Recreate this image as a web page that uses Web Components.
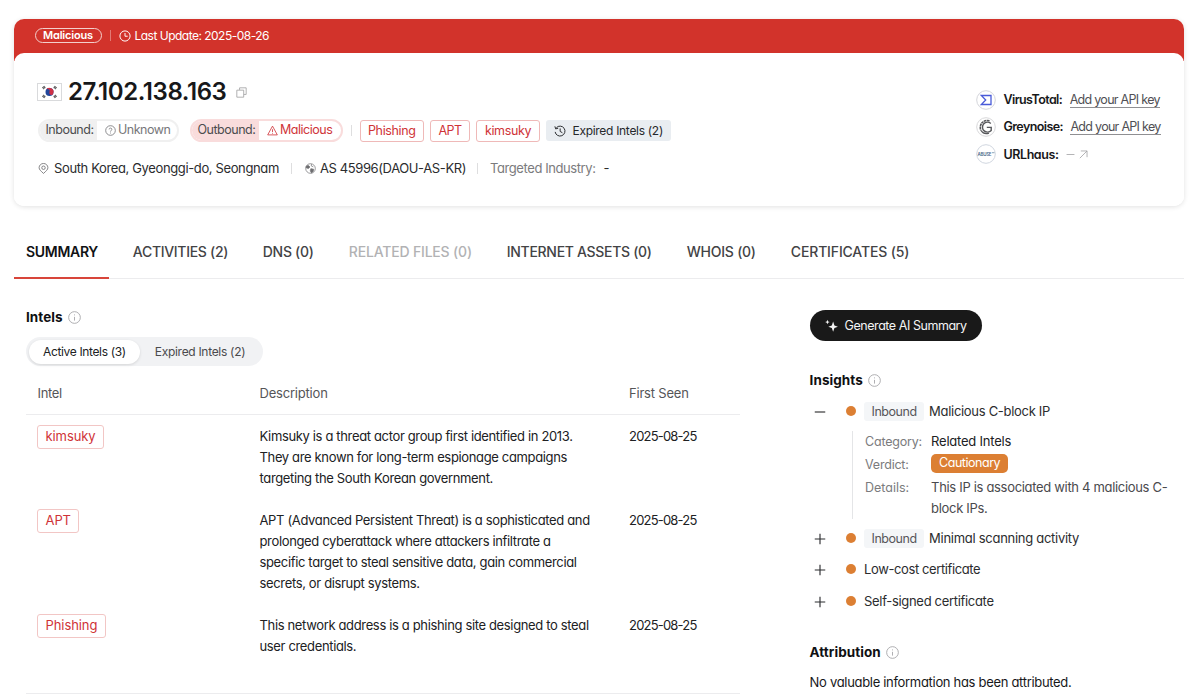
<!DOCTYPE html>
<html lang="en">
<head>
<meta charset="utf-8">
<title>27.102.138.163</title>
<style>
  :root {
    --red: #d2332b;
    --orange: #dc7f33;
    --ink: #17181a;
    --gray: #7b7b7d;
    --line: #ececee;
  }
  body {
    margin: 0;
    height: 699px;
    overflow: hidden;
    background: #fff;
    color: var(--ink);
    font: 13px/21px Inter, "Liberation Sans", sans-serif;
    font-feature-settings: "cv11";
    letter-spacing: -0.35px;
    white-space: nowrap;
  }
</style>
</head>
<body>
<ip-report></ip-report>

<script>
// --- Icons ---
const ICONS = {
  clock: `<circle cx="8" cy="8" r="6.8"/><path d="M8 4v4.3h3.6"/>`,
  copy: `<path d="M5.2 4.2V1.2h9.6v9.6h-3.4"/><path d="M1.2 4.6h10v10.2h-10z"/>`,
  help: `<circle cx="8" cy="8" r="7"/><path d="M6 6.4C6 3.8 10 4 10 6.3 10 8 8 7.8 8 9.6M8 11v1.3"/>`,
  warn: `<path d="M8 1.6 15 14.4H1Z"/><path d="M8 6.2v4M8 11.4v1.2"/>`,
  history: `<path d="M3.2 3.6A6.6 6.6 0 1 1 1.5 9.2M1.2 1.8l1 3.4 3.4-.9"/><path d="M8.2 4.6v4l3 1.7"/>`,
  pin: `<path d="M8 15.2C4.2 11.6 1.6 9.6 1.6 6.8a6.4 6.1 0 0 1 12.8 0C14.4 9.6 11.8 11.6 8 15.2Z"/><circle cx="8" cy="6.9" r="2.5"/>`,
  globe: `<circle cx="8" cy="8" r="7"/><path d="M2 4.5 5 3.6 7.2 5.8 5 8 1.6 7Z" fill="currentColor"/><path d="M8.5 8.2l4 .8-.6 3.2-2.6 2.2-1.6-3Z" fill="currentColor"/><path d="M9.5 1.6l-.4 2.600 3 1.400"/>`,
  info: `<circle cx="8" cy="8" r="7.2"/><path d="M8 7.2v4.6M8 4.2v1.2"/>`,
  arrow: `<path d="M1.5 14.5 14.3 1.7M3.2 1.7h11.1v11.1"/>`,
  minus: `<path d="M1 8h14"/>`,
  plus: `<path d="M1 8h14M8 1v14"/>`,
  spark: `<path d="M10 3.2 11.6 7.9 15.9 9.5 11.6 11.1 10 15.8 8.4 11.1 4.1 9.5 8.4 7.9ZM3 1l.8 2 2 .8-2 .8L3 6.6l-.8-2-2-.8 2-.8Z" fill="currentColor" stroke="none"/>`
};

class UiIcon extends HTMLElement {
  constructor() {
    super();
    this.attachShadow({ mode: 'open' });
  }

  connectedCallback() {
    const size = this.getAttribute('size') || 12;
    const weight = this.getAttribute('weight') || 1.3;
    this.shadowRoot.innerHTML = `
      <style>
        :host { display: block; flex: none; }
        svg { display: block; }
      </style>
      <svg width="${size}" height="${size}" viewBox="0 0 16 16" fill="none"
        stroke="currentColor" stroke-width="${weight}">${ICONS[this.getAttribute('name')]}</svg>
    `;
  }
}

// --- Elements that only wrap their slot ---
const define = (name, css, html = '<slot></slot>') => {
  customElements.define(name, class extends HTMLElement {
    constructor() {
      super();
      this.attachShadow({ mode: 'open' }).innerHTML = `<style>${css}</style>${html}`;
    }
  });
};

define('ui-divider', `
  :host { display: block; flex: none; width: 1px; height: 11px; background: #dededf; }
`);

define('intel-chip', `
  :host {
    display: block;
    box-sizing: border-box;
    height: 22px;
    padding: 0 7.5px;
    border: 1px solid #efb9b8;
    border-radius: 3px;
    background: #fff;
    color: #cf3337;
    font-size: 12.5px;
    line-height: 19px;
    text-align: center;
  }
`);

define('section-title', `
  :host {
    display: flex;
    align-items: center;
    gap: 5px;
    height: 20px;
    font-size: 13.5px;
    font-weight: 700;
    line-height: 20px;
    letter-spacing: 0.05px;
    color: #0f1012;
  }
  ui-icon { color: #a5a5a8; margin-top: 1px; }
`, '<slot></slot><ui-icon name="info" size="13" weight="1.1"></ui-icon>');

define('direction-pill', `
  :host {
    display: flex;
    box-sizing: border-box;
    height: 23px;
    border: 2px solid var(--tint);
    border-radius: 12px;
    overflow: hidden;
    background: #fff;
    color: var(--tone);
    font-size: 12.5px;
    line-height: 18px;
    letter-spacing: -0.49px;
  }
  .label {
    box-sizing: border-box;
    width: var(--label);
    padding-left: 5.5px;
    background: var(--tint);
    color: #4c4c4e;
  }
  .value { display: flex; align-items: center; gap: 2px; height: 18px; padding-left: 8px; }
`, '<div class="label"><slot name="label"></slot></div><div class="value"><slot></slot></div>');

// --- Header card ---
define('ip-header', `
  :host {
    display: block;
    height: 187px;
    border-radius: 10px;
    background: linear-gradient(var(--red) 0 42px, #fff 42px);
    box-shadow: 0 1px 5px rgba(0, 0, 0, 0.12);
  }
  .ribbon {
    display: flex;
    align-items: center;
    height: 33.5px;
    padding-left: 20.5px;
    box-sizing: border-box;
    color: #fff;
    font-size: 12px;
    letter-spacing: -0.51px;
  }
  .verdict {
    box-sizing: border-box;
    width: 67px;
    height: 15px;
    margin-right: 8px;
    border: 1px solid #f3cfcc;
    border-radius: 8px;
    font-size: 11px;
    font-weight: 600;
    line-height: 13px;
    letter-spacing: -0.17px;
    text-align: center;
  }
  .ribbon ui-divider { background: #e27a74; }
  .ribbon ui-icon { margin: 0 4px 0 8px; }
  .card {
    box-sizing: border-box;
    display: flex;
    justify-content: space-between;
    height: 153.5px;
    padding: 25.5px 0 0 24px;
    border-radius: 10px;
    background: #fff;
  }
  .row { display: flex; align-items: center; }
  .ip { height: 27px; gap: 6.5px; margin-left: -1.5px; }
  .ip b {
    font-size: 24px;
    font-weight: 600;
    letter-spacing: -0.42px;
    line-height: 28px;
  }
  .ip ui-icon { color: #a0a0a2; margin: 2px 0 0 3.5px; }
  .tags { height: 23px; margin-top: 14px; letter-spacing: -0.36px; }
  .tags ui-divider { margin: 0 8px; }
  .tags intel-chip { margin-right: 6px; }
  .expired {
    display: flex;
    align-items: center;
    box-sizing: border-box;
    width: 125px;
    height: 21px;
    padding-left: 8px;
    gap: 6.5px;
    border-radius: 3px;
    background: #e9edf1;
    font-size: 12px;
    line-height: 20px;
    letter-spacing: -0.3px;
    color: #26282b;
  }
  .place { height: 21px; margin-top: 16px; color: #2b2c2e; letter-spacing: -0.37px; }
  .place ui-icon { color: #6d6d70; }
  .sources {
    display: grid;
    grid-auto-rows: 27.3px;
    width: 208.5px;
    margin-top: 8px;
    font-size: 12.5px;
  }
  .source { display: flex; align-items: center; }
  .source svg { display: block; margin-right: 8px; }
  .source b { font-weight: 600; letter-spacing: -0.59px; margin-right: 7.5px; }
  .source a { border-bottom: 1px solid #8f8f92; color: #505054; letter-spacing: -0.71px; line-height: 15px; }
`, `
  <div class="ribbon">
    <div class="verdict">Malicious</div>
    <ui-divider></ui-divider>
    <ui-icon name="clock" size="12"></ui-icon>
    Last Update: 2025-08-26
  </div>
  <div class="card">
    <div>
      <div class="row ip">
        <svg width="25" height="18" viewBox="0 0 25 18">
          <rect x=".5" y=".5" width="24" height="17" fill="#fff" stroke="#d9dadc"/>
          <circle cx="12.5" cy="9" r="4" fill="#22479b"/>
          <path d="M8.5 9A4 4 0 0 1 16.5 9a2 2 0 0 1-4 0 2 2 0 0 0-4 0Z" fill="#cd3045" transform="rotate(25 12.5 9)"/>
          <g stroke="#3a3a3c" stroke-width="3" stroke-dasharray=".8 .3">
            <path d="M6.2 3.6 7.6 5.6M18.8 3.6l-1.4 2M6.2 14.4l1.4-2M18.8 14.4l-1.4-2"/>
          </g>
        </svg>
        <b>27.102.138.163</b>
        <ui-icon name="copy" size="11" weight="1.2"></ui-icon>
      </div>
      <div class="row tags">
        <direction-pill style="--tint:#f0f0f0;--tone:#77777a;--label:57px;width:141px">
          <span slot="label">Inbound:</span><ui-icon name="help" size="11" weight="1.2"></ui-icon>Unknown
        </direction-pill>
        <direction-pill style="--tint:#f9dcdc;--tone:#d0353a;--label:67px;width:152.5px;margin-left:11px">
          <span slot="label">Outbound:</span><ui-icon name="warn" size="11" weight="1.2"></ui-icon>Malicious
        </direction-pill>
        <ui-divider></ui-divider>
        <intel-chip style="width:64.5px">Phishing</intel-chip>
        <intel-chip style="width:40px;letter-spacing:-.6px">APT</intel-chip>
        <intel-chip style="width:64px">kimsuky</intel-chip>
        <div class="expired"><ui-icon name="history" size="12"></ui-icon>Expired Intels (2)</div>
      </div>
      <div class="row place">
        <ui-icon name="pin" size="11" weight="1.2" style="margin-right:5px"></ui-icon>
        South Korea, Gyeonggi-do, Seongnam
        <ui-divider style="margin:0 13px 0 12px"></ui-divider>
        <ui-icon name="globe" size="11" weight="1" style="margin-right:4px"></ui-icon>
        <span style="letter-spacing:-.39px">AS 45996(DAOU-AS-KR)</span>
        <ui-divider style="margin:0 12px 0 11px"></ui-divider>
        <span style="color:var(--gray);letter-spacing:-.42px;margin-right:8px">Targeted Industry:</span> -
      </div>
    </div>
    <div class="sources">
      <div class="source">
        <svg width="20" height="20" viewBox="0 0 20 20" fill="none">
          <circle cx="10" cy="10" r="9.3" stroke="#d4d5da"/>
          <path d="M5.3 5.5H15v9H5.3L9.7 10Z" stroke="#4a5bd8" stroke-width="1.3"/>
        </svg>
        <b>VirusTotal:</b><a>Add your API key</a>
      </div>
      <div class="source">
        <svg width="20" height="20" viewBox="0 0 20 20" fill="none">
          <circle cx="10" cy="10" r="9.3" stroke="#d8d8da"/>
          <g stroke="#57585b">
            <path d="M13.5 3.8A7 7 0 0 0 5 13.5" stroke-width="1.6" stroke-dasharray="2.6 .5"/>
            <path d="M14.8 6.4A5 5 0 1 0 15.2 13.5V10.4H10.8" stroke-width="1.4"/>
            <path d="M5 13.5a6.6 6.6 0 0 0 8 2.6" stroke-width="1.2"/>
          </g>
        </svg>
        <b>Greynoise:</b><a>Add your API key</a>
      </div>
      <div class="source">
        <svg width="20" height="20" viewBox="0 0 20 20">
          <circle cx="10" cy="10" r="9.3" fill="#fff" stroke="#d0d6df"/>
          <text x="1.5" y="11.6" font-size="4.4" font-weight="600" fill="#4c6a8c" textLength="14" letter-spacing="0">ABUSE</text>
          <path d="M16 8.7h2.5" stroke="#8fa6bb"/>
        </svg>
        <b style="letter-spacing:-.43px">URLhaus:</b>
        <ui-icon name="minus" size="9" weight="1.4" style="color:#a0a0a2;margin-right:4px"></ui-icon>
        <ui-icon name="arrow" size="9" weight="1.4" style="color:#a0a0a2"></ui-icon>
      </div>
    </div>
  </div>
`);

// --- Tabs ---
define('tab-bar', `
  :host {
    display: flex;
    gap: 11px;
    height: 54px;
    margin-top: 18px;
    border-bottom: 1px solid var(--line);
    font-size: 14px;
    font-weight: 500;
    color: #434345;
  }
`);

define('tab-item', `
  :host {
    box-sizing: border-box;
    display: block;
    height: 55px;
    padding-left: 12.8px;
    line-height: 56px;
    letter-spacing: -0.3px;
  }
  :host([active]) {
    padding-left: 12px;
    border-bottom: 2px solid #d8453a;
    color: #111214;
    font-weight: 600;
  }
  :host([disabled]) { color: #b2b2b4; }
`);

// --- Intel table ---
define('segment-control', `
  :host {
    display: flex;
    box-sizing: border-box;
    width: 237px;
    height: 29px;
    padding: 2.5px;
    margin-top: 10px;
    border-radius: 15px;
    background: #f1f2f4;
    font-size: 12px;
    line-height: 24px;
    color: #4a4a4d;
  }
  ::slotted(*) { padding: 0 14.5px; }
  ::slotted(.on) {
    background: #fff;
    border-radius: 12px;
    box-shadow: 0 1px 3px rgba(0, 0, 0, 0.12);
    color: #202123;
  }
`);

class IntelRow extends HTMLElement {
  constructor() {
    super();
    this.attachShadow({ mode: 'open' });
  }

  connectedCallback() {
    const head = this.hasAttribute('head');
    this.shadowRoot.innerHTML = `
      <style>
        :host {
          display: grid;
          grid-template-columns: 222px 369.5px 1fr;
          align-items: start;
          padding: 11px 0 10px 11.5px;
          color: #202123;
        }
        :host([head]) {
          padding: 17px 0 10px 11.5px;
          border-bottom: 1px solid var(--line);
          color: #555558;
        }
        intel-chip {
          width: max-content;
          height: 24px;
          margin: -1px 0 -2px -0.5px;
          border-color: #f2c6c5;
          font-size: 13px;
          line-height: 21px;
          letter-spacing: -0.08px;
        }
        .date { letter-spacing: ${head ? '-0.2px' : '-0.8px'}; }
      </style>
      <div>${head ? 'Intel' : `<intel-chip>${this.getAttribute('tag')}</intel-chip>`}</div>
      <slot></slot>
      <div class="date">${this.getAttribute('date')}</div>
    `;
  }
}

// --- Insights ---
class InsightItem extends HTMLElement {
  constructor() {
    super();
    this.attachShadow({ mode: 'open' });
  }

  connectedCallback() {
    const inbound = this.hasAttribute('inbound');
    this.shadowRoot.innerHTML = `
      <style>
        :host { display: block; }
        .line { display: flex; align-items: center; height: 31.2px; color: #2b2c2e; }
        ui-icon { margin: 1px 20px 0 4.5px; }
        .dot { width: 10px; height: 10px; margin: -1px 8px 0 0; border-radius: 50%; background: var(--orange); }
        .tag {
          box-sizing: border-box;
          width: 60px;
          height: 19px;
          margin-right: 5px;
          border-radius: 3px;
          background: #f4f6f8;
          color: #57575a;
          font-size: 12.5px;
          line-height: 19px;
          letter-spacing: -0.45px;
          text-align: center;
        }
      </style>
      <div class="line">
        <ui-icon name="${this.hasAttribute('open') ? 'minus' : 'plus'}" size="12" weight="1.5"></ui-icon>
        <div class="dot"></div>
        ${inbound ? '<div class="tag">Inbound</div>' : ''}
        ${this.getAttribute('label')}
      </div>
      <slot></slot>
    `;
  }
}

define('insight-detail', `
  :host {
    box-sizing: border-box;
    display: grid;
    grid-template-columns: 66px 1fr;
    grid-template-rows: 23px 23.5px 42px;
    height: 88.5px;
    margin: 4px 0 4px 42px;
    padding-left: 12.5px;
    border-left: 1px solid #e4e5e7;
    color: #4a4a4d;
  }
  dt { color: var(--gray); font-size: 12.5px; letter-spacing: -0.22px; }
  .badge {
    width: 77px;
    height: 19px;
    border-radius: 5px;
    background: var(--orange);
    color: #fff;
    font-size: 12.5px;
    line-height: 18px;
    letter-spacing: -0.47px;
    text-align: center;
  }
`, `
  <dt>Category:</dt><div style="color:#202123;letter-spacing:-.22px">Related Intels</div>
  <dt>Verdict:</dt><div class="badge">Cautionary</div>
  <dt style="letter-spacing:-.02px">Details:</dt><div style="letter-spacing:-.32px">This IP is associated with 4 malicious C-<br>block IPs.</div>
`);

define('ai-button', `
  :host {
    display: flex;
    align-items: center;
    box-sizing: border-box;
    width: 172.5px;
    height: 31px;
    padding-left: 15px;
    gap: 7px;
    border-radius: 16px;
    background: #191919;
    color: #f4f4f4;
    font-size: 12.5px;
    letter-spacing: -0.45px;
  }
`, '<ui-icon name="spark" size="13"></ui-icon><slot></slot>');

// --- Page ---
define('ip-report', `
  :host { display: block; padding: 19px 16px 0 14px; }
  .body { display: grid; grid-template-columns: 714px 1fr; column-gap: 69.6px; padding-left: 12px; }
  .intels { padding-top: 28px; }
  .table { padding-bottom: 26px; border-bottom: 1px solid var(--line); }
  .side { padding-top: 31px; }
  .side section-title { margin-top: 28.5px; }
  .insights { margin-top: 6px; }
`, `
  <ip-header></ip-header>
  <tab-bar>
    <tab-item active style="width:95px">SUMMARY</tab-item>
    <tab-item style="width:119px">ACTIVITIES (2)</tab-item>
    <tab-item style="width:75px">DNS (0)</tab-item>
    <tab-item disabled style="width:147px;letter-spacing:-.18px">RELATED FILES (0)</tab-item>
    <tab-item style="width:169px">INTERNET ASSETS (0)</tab-item>
    <tab-item style="width:93px;letter-spacing:-.24px">WHOIS (0)</tab-item>
    <tab-item style="letter-spacing:-.15px">CERTIFICATES (5)</tab-item>
  </tab-bar>
  <div class="body">
    <div class="intels">
      <section-title>Intels</section-title>
      <segment-control>
        <span class="on">Active Intels (3)</span>
        <span style="letter-spacing:-.3px">Expired Intels (2)</span>
      </segment-control>
      <div class="table">
        <intel-row head date="First Seen"><span style="letter-spacing:-.2px">Description</span></intel-row>
        <intel-row tag="kimsuky" date="2025-08-25">
          <span>Kimsuky is a threat actor group first identified in 2013.<br>They are known for long-term espionage campaigns<br>targeting the South Korean government.</span>
        </intel-row>
        <intel-row tag="APT" date="2025-08-25">
          <span>APT (Advanced Persistent Threat) is a sophisticated and<br>prolonged cyberattack where attackers infiltrate a<br>specific target to steal sensitive data, gain commercial<br>secrets, or disrupt systems.</span>
        </intel-row>
        <intel-row tag="Phishing" date="2025-08-25">
          <span>This network address is a phishing site designed to steal<br>user credentials.</span>
        </intel-row>
      </div>
    </div>
    <div class="side">
      <ai-button>Generate AI Summary</ai-button>
      <section-title>Insights</section-title>
      <div class="insights">
        <insight-item open inbound label="Malicious C-block IP" style="letter-spacing:-.3px"><insight-detail></insight-detail></insight-item>
        <insight-item inbound label="Minimal scanning activity" style="letter-spacing:-.28px"></insight-item>
        <insight-item label="Low-cost certificate" style="letter-spacing:-.4px"></insight-item>
        <insight-item label="Self-signed certificate" style="letter-spacing:-.32px"></insight-item>
      </div>
      <section-title style="margin-top:25px">Attribution</section-title>
      <div style="margin-top:10px;letter-spacing:-.31px">No valuable information has been attributed.</div>
    </div>
  </div>
`);

customElements.define('ui-icon', UiIcon);
customElements.define('intel-row', IntelRow);
customElements.define('insight-item', InsightItem);
</script>
</body>
</html>
